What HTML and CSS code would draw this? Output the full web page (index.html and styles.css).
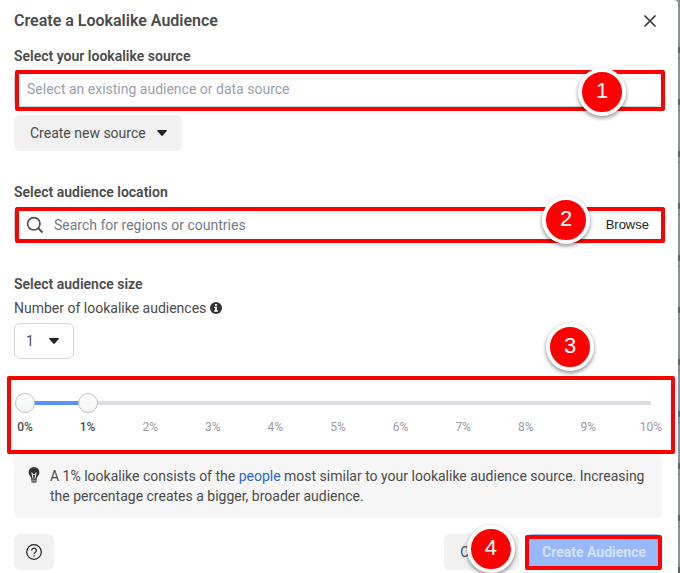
FILE: index.html
```html
<!DOCTYPE html>
<html lang="en">
<head>
  <meta charset="UTF-8">
  <title>Create a Lookalike Audience</title>
  <link rel="stylesheet" href="styles.css">
</head>
<body>
  <main class="dialog">
    <header class="header">
      <h1>Create a Lookalike Audience</h1>
      <button class="close" aria-label="Close">
        <svg width="14" height="14" viewBox="0 0 14 14"><path d="M1.5 1.5l11 11M12.5 1.5l-11 11" stroke="#333" stroke-width="1.6" fill="none"/></svg>
      </button>
    </header>

    <section class="source">
      <label class="label" for="source">Select your lookalike source</label>
      <div class="field">
        <input id="source" type="text" placeholder="Select an existing audience or data source">
        <span class="frame frame-source"></span>
        <span class="badge badge-1">1</span>
      </div>
      <button class="btn new-source">Create new source
        <svg width="12" height="8" viewBox="0 0 12 8"><path d="M1.8 1h8.4q1.3 0 .5 1L7 6.3q-1 1-2 0L1.3 2q-.8-1 .5-1z" fill="#222"/></svg>
      </button>
    </section>

    <section class="location">
      <label class="label" for="location">Select audience location</label>
      <div class="field search">
        <svg width="18" height="18" viewBox="0 0 18 18"><circle cx="7.8" cy="7.8" r="6.2" fill="none" stroke="#4b4f56" stroke-width="1.6"/><path d="M12.3 12.3l4.2 4.2" stroke="#4b4f56" stroke-width="2"/></svg>
        <input id="location" type="text" placeholder="Search for regions or countries">
        <button class="browse">Browse</button>
        <span class="frame frame-location"></span>
        <span class="badge badge-2">2</span>
      </div>
    </section>

    <section class="size">
      <h2 class="label">Select audience size</h2>
      <div class="count-label">
        <label for="count">Number of lookalike audiences</label>
        <svg width="12" height="12" viewBox="0 0 12 12"><circle cx="6" cy="6" r="6" fill="#333"/><path d="M5 2h2v1.8H5zM4 4.8h3v3.7h1v1.3H4V8.5h1V6H4z" fill="#fff"/></svg>
      </div>
      <div class="select">
        <select id="count"><option>1</option><option>2</option><option>3</option></select>
        <svg width="12" height="8" viewBox="0 0 12 8"><path d="M1.8 1h8.4q1.3 0 .5 1L7 6.3q-1 1-2 0L1.3 2q-.8-1 .5-1z" fill="#222"/></svg>
      </div>
      <span class="badge badge-3">3</span>
    </section>

    <section class="slider">
      <div class="ranges">
        <div class="track"><div class="fill" style="width: 10%"></div></div>
        <input type="range" min="0" max="10" value="0" aria-label="Smallest percentage">
        <input type="range" min="0" max="10" value="1" aria-label="Largest percentage">
      </div>
      <ul class="ticks">
        <li class="on">0%</li>
        <li class="on">1%</li>
        <li>2%</li>
        <li>3%</li>
        <li>4%</li>
        <li>5%</li>
        <li>6%</li>
        <li>7%</li>
        <li>8%</li>
        <li>9%</li>
        <li>10%</li>
      </ul>
    </section>

    <div class="tip">
      <svg width="12" height="18" viewBox="0 0 12 18"><path d="M6 1a5.4 5.4 0 0 0-5.4 5.4c0 2 1.1 3 1.9 4.2.5.7.6 1.4.7 2.1h5.6c.1-.7.2-1.4.7-2.1.8-1.2 1.9-2.2 1.9-4.2A5.4 5.4 0 0 0 6 1z" fill="#333"/><path d="M3.8 6.5l1.2 5.5M8.2 6.5L7 12M4.3 7.5L6 9l1.7-1.5" stroke="#f6f6f6" fill="none"/><path d="M3 13.8h6M3.5 15.8h5" stroke="#333" stroke-width="1.2"/></svg>
      <p>A 1% lookalike consists of the <a href="#">people</a> most similar to your lookalike audience source. Increasing the percentage creates a bigger, broader audience.</p>
    </div>

    <footer class="footer">
      <button class="btn help" aria-label="Help">
        <svg width="16" height="16" viewBox="0 0 16 16" fill="none" stroke="#222"><circle cx="8" cy="8" r="7.3" stroke-width="1.2"/><path d="M5.7 6.4a2.3 2.3 0 1 1 3.7 1.8C8.5 8.8 8 9.2 8 10" stroke-width="1.2"/><path d="M8 11.2v1.4" stroke-width="1.4"/></svg>
      </button>
      <div class="cancel">
        <button class="btn">Cancel</button>
        <span class="badge badge-4">4</span>
      </div>
      <div class="create">
        <button class="btn primary" disabled>Create Audience</button>
        <span class="frame frame-create"></span>
      </div>
    </footer>
  </main>
</body>
</html>
```
FILE: styles.css
```css
* {
  box-sizing: border-box;
  margin: 0;
  padding: 0;
}

body {
  background: repeating-linear-gradient(#8f9091 0 40px, #606162 40px 46px, #8f9091 46px 51px, #77787a 51px 52px);
  background-position: 0 7px;
  font-family: Roboto, "Liberation Sans", sans-serif;
  font-size: 14px;
  line-height: 20px;
  color: #4b4b4b;
}

button,
input,
select {
  font: inherit;
  color: inherit;
  border: none;
  background: none;
  outline: none;
}

button {
  cursor: pointer;
}

svg {
  display: block;
  flex: none;
}

.dialog {
  margin-right: 2px;
  padding: 10px 16px 3px 14px;
  min-height: 100vh;
  background: #fff;
  border-top-right-radius: 4px;
}

.header {
  display: flex;
  justify-content: space-between;
  align-items: center;
  height: 21px;
  margin-bottom: 15px;
}

h1 {
  font-size: 16px;
  font-weight: 600;
}

.close {
  padding: 5px;
}

.label {
  display: block;
  margin-bottom: 5px;
  font-size: 14px;
  font-weight: 600;
}

.field {
  position: relative;
  display: flex;
  align-items: center;
  gap: 10px;
  height: 36px;
  padding: 0 12px;
  border: 1px solid #ccd0d5;
  border-radius: 6px;
}

.field input {
  flex: 1;
  min-width: 0;
}

.field input::placeholder {
  color: #9aa0ab;
}

.search {
  padding-left: 11px;
}

.search input::placeholder {
  color: #747b87;
}

.browse {
  font-family: "Liberation Sans", Arial, sans-serif;
  font-size: 13px;
  color: #222;
}

.btn {
  display: flex;
  align-items: center;
  justify-content: center;
  height: 36px;
  padding: 0 16px;
  background: #f1f1f1;
  border-radius: 6px;
}

.new-source {
  gap: 10px;
  margin-top: 8px;
  padding: 0 14px 0 16px;
}

.location {
  margin-top: 31px;
}

.size {
  position: relative;
  margin-top: 31px;
}

.size .label {
  margin-bottom: 4px;
}

.count-label {
  display: flex;
  align-items: center;
  gap: 4px;
  margin-bottom: 5px;
}

.select {
  display: grid;
  align-items: center;
  width: 60px;
  height: 36px;
  border: 1px solid #d5d7da;
  border-radius: 6px;
}

.select select,
.select svg {
  grid-area: 1 / 1;
}

.select select {
  appearance: none;
  height: 34px;
  padding-left: 11px;
}

.select svg {
  justify-self: end;
  margin-right: 13px;
  pointer-events: none;
}

.slider {
  margin: 17px -13px 0 -7px;
  padding: 13px 10px 13px 4px;
  border: 4px solid #f00;
  border-radius: 2px;
}

.ranges {
  display: grid;
  align-items: center;
}

.track,
.ranges input {
  grid-area: 1 / 1;
}

.track {
  height: 4px;
  margin: 0 10px;
  background: #dadce2;
}

.fill {
  height: 4px;
  background: #5890ff;
}

.ranges input {
  appearance: none;
  width: 100%;
  height: 20px;
  pointer-events: none;
}

.ranges input::-webkit-slider-thumb {
  appearance: none;
  width: 20px;
  height: 20px;
  background: linear-gradient(#fff, #f3f4f6);
  border: 1px solid #bec0c4;
  border-radius: 50%;
  pointer-events: auto;
}

.ticks {
  display: flex;
  justify-content: space-between;
  margin: 4px -10px 0;
  list-style: none;
  font-size: 12px;
  color: #9a9b9e;
}

.ticks li {
  width: 40px;
  text-align: center;
}

.ticks .on {
  font-weight: 500;
  color: #4b4b4b;
}

.tip {
  display: flex;
  gap: 10px;
  padding: 12px 14px;
  background: #f6f6f6;
  border-radius: 6px;
}

.tip a {
  color: #2d64d8;
  text-decoration: none;
}

.footer {
  display: flex;
  margin-top: 16px;
}

.help {
  width: 40px;
  padding: 0;
  margin-right: auto;
}

.cancel,
.create {
  position: relative;
}

.create {
  margin-left: 7px;
}

.primary {
  background: #98b9f9;
  color: #d3e1fd;
  font-weight: 700;
}

/* numbered callouts */
.frame {
  position: absolute;
  border: 4px solid #f00;
  border-radius: 2px;
  pointer-events: none;
}

.frame-source {
  inset: -2px -4px -5px 0;
}

.frame-location {
  inset: -1px -4px -1px 0;
}

.frame-create {
  inset: 1px 0 0 -1px;
}

.badge {
  position: absolute;
  display: flex;
  align-items: center;
  justify-content: center;
  width: 48px;
  height: 48px;
  padding-bottom: 2px;
  background: #f00;
  border: 4px solid #fff;
  border-radius: 50%;
  box-shadow: 0 2px 4px rgba(0, 0, 0, 0.45);
  font-family: "Liberation Sans", Arial, sans-serif;
  font-size: 22px;
  color: #fff;
}

.badge-1 {
  top: -4px;
  right: 35px;
}

.badge-2 {
  top: -12px;
  right: 71px;
}

.badge-3 {
  top: 49px;
  right: 68px;
}

.badge-4 {
  top: -9px;
  right: 4px;
}
```
